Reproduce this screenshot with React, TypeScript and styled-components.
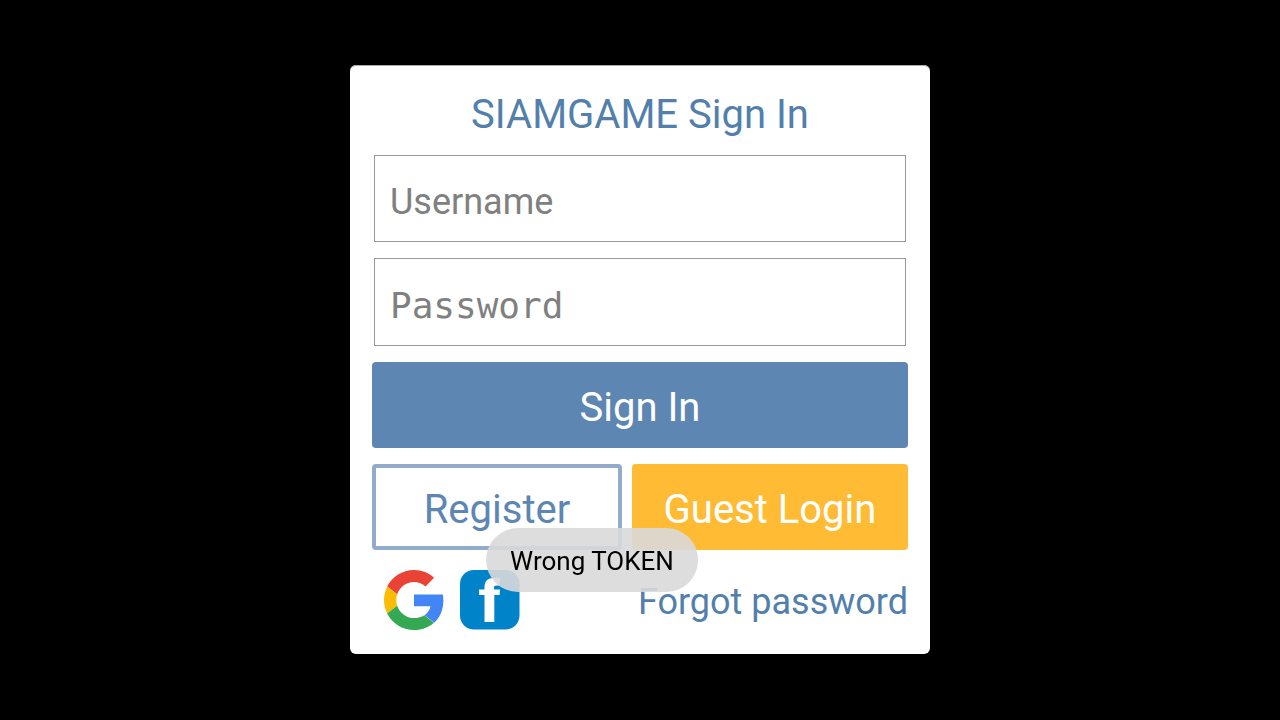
import React from "react";
import styled, { createGlobalStyle, css } from "styled-components";

const GlobalStyle = createGlobalStyle`
  *, *::before, *::after { box-sizing: border-box; }
  body {
    margin: 0;
    background: #000;
    font-family: Roboto, "Liberation Sans", sans-serif;
  }
`;

const Page = styled.main`
  display: flex;
  align-items: center;
  justify-content: center;
  min-height: 100vh;
  padding: 0 16px 1px;
`;

const Card = styled.form`
  display: flex;
  flex-direction: column;
  gap: 16px;
  width: 100%;
  max-width: 580px;
  padding: 24px 22px;
  background: #fff;
  border-radius: 6px;
  box-shadow: inset 0 1px 0 #aaa;
`;

const Title = styled.h1`
  margin: 0;
  padding-top: 2px;
  color: #527fab;
  font-size: 40px;
  font-weight: 400;
  line-height: 48px;
  text-align: center;
`;

const Field = styled.input<{ $mono?: boolean }>`
  height: ${(p) => (p.$mono ? 88 : 87)}px;
  margin: 0 2px;
  padding: 6px 15px 0;
  border: 1px solid #999;
  border-radius: 0;
  background: #fff;
  color: #222;
  font-family: ${(p) => (p.$mono ? '"DejaVu Sans Mono", monospace' : "inherit")};
  font-size: 36px;
  outline: none;

  &::placeholder {
    color: #808080;
    opacity: 1;
  }
`;

const variants = {
  primary: css`
    background: #5d86b2;
    color: #fff;
  `,
  outline: css`
    background: #fff;
    border: 4px solid #93abcb;
    color: #5d86b2;
  `,
  accent: css`
    background: #ffbb33;
    color: #fff;
  `,
};

const Button = styled.button<{ $variant: keyof typeof variants }>`
  display: flex;
  align-items: center;
  justify-content: center;
  height: 86px;
  padding: 4px 0 0;
  border: 0;
  border-radius: 4px;
  font-family: inherit;
  font-size: 40px;
  cursor: pointer;
  ${(p) => variants[p.$variant]}
`;

const ButtonRow = styled.div`
  display: grid;
  grid-template-columns: 250fr 276fr;
  gap: 10px;
`;

const Footer = styled.div`
  display: flex;
  align-items: center;
  justify-content: space-between;
  padding-top: 4px;
`;

const Socials = styled.div`
  display: flex;
  gap: 16px;
  padding-left: 12px;
`;

const IconButton = styled.button`
  width: 60px;
  height: 60px;
  padding: 0;
  border: 0;
  background: none;
  cursor: pointer;

  svg { display: block; }
`;

const ForgotLink = styled.a`
  padding-top: 4px;
  color: #527fab;
  font-size: 36px;
  text-decoration: none;
`;

const Toast = styled.div`
  position: fixed;
  bottom: 128px;
  left: calc(50% - 48px);
  transform: translateX(-50%);
  padding: 17px 24px 15px;
  border-radius: 32px;
  background: rgba(217, 217, 217, 0.9);
  color: #000;
  font-size: 26px;
  line-height: 32px;
  white-space: nowrap;
`;

const GoogleLogo = () => (
  <svg width="60" height="60" viewBox="0 0 48 48" aria-hidden="true">
    <path fill="#EA4335" d="M24 9.5c3.54 0 6.71 1.22 9.21 3.6l6.85-6.85C35.9 2.38 30.47 0 24 0 14.62 0 6.51 5.38 2.56 13.22l7.98 6.19C12.43 13.72 17.74 9.5 24 9.5z" />
    <path fill="#4285F4" d="M47.5 24.55c0-1.73-.15-3.4-.42-4.95H24v9.42h13.2c-.58 2.96-2.26 5.48-4.78 7.18l7.73 6c4.51-4.18 7.35-10.36 7.35-17.65z" />
    <path fill="#FBBC05" d="M10.53 28.59c-.48-1.45-.76-2.99-.76-4.59s.27-3.14.76-4.59l-7.98-6.19C.92 16.46 0 20.12 0 24c0 3.88.92 7.54 2.56 10.78l7.97-6.19z" />
    <path fill="#34A853" d="M24 48c6.48 0 11.93-2.13 15.89-5.81l-7.73-6c-2.15 1.45-4.92 2.3-8.16 2.3-6.26 0-11.57-4.22-13.47-9.91l-7.98 6.19C6.51 42.62 14.62 48 24 48z" />
  </svg>
);

const FacebookLogo = () => (
  <svg width="60" height="60" viewBox="0 0 60 60" aria-hidden="true">
    <rect width="59.5" height="59.5" rx="14" fill="#0083C9" />
    <path fill="#fff" d="M24.5 52V25H19v-5.500h5.500V17C24.500 11 28 8 33.500 8H40v7.500h-3.500c-1.800 0-2.500 .8-2.500 2.200v1.800h6L39.600 25H34.300v27z" />
  </svg>
);

export default function App() {
  return (
    <>
      <GlobalStyle />
      <Page>
        <Card onSubmit={(e: React.FormEvent) => e.preventDefault()}>
          <Title>SIAMGAME Sign In</Title>
          <Field type="text" placeholder="Username" aria-label="Username" />
          <Field $mono type="password" placeholder="Password" aria-label="Password" />
          <Button $variant="primary" type="submit">Sign In</Button>
          <ButtonRow>
            <Button $variant="outline" type="button">Register</Button>
            <Button $variant="accent" type="button">Guest Login</Button>
          </ButtonRow>
          <Footer>
            <Socials>
              <IconButton type="button" aria-label="Sign in with Google"><GoogleLogo /></IconButton>
              <IconButton type="button" aria-label="Sign in with Facebook"><FacebookLogo /></IconButton>
            </Socials>
            <ForgotLink href="#forgot">Forgot password</ForgotLink>
          </Footer>
        </Card>
      </Page>
      <Toast role="status">Wrong TOKEN</Toast>
    </>
  );
}
